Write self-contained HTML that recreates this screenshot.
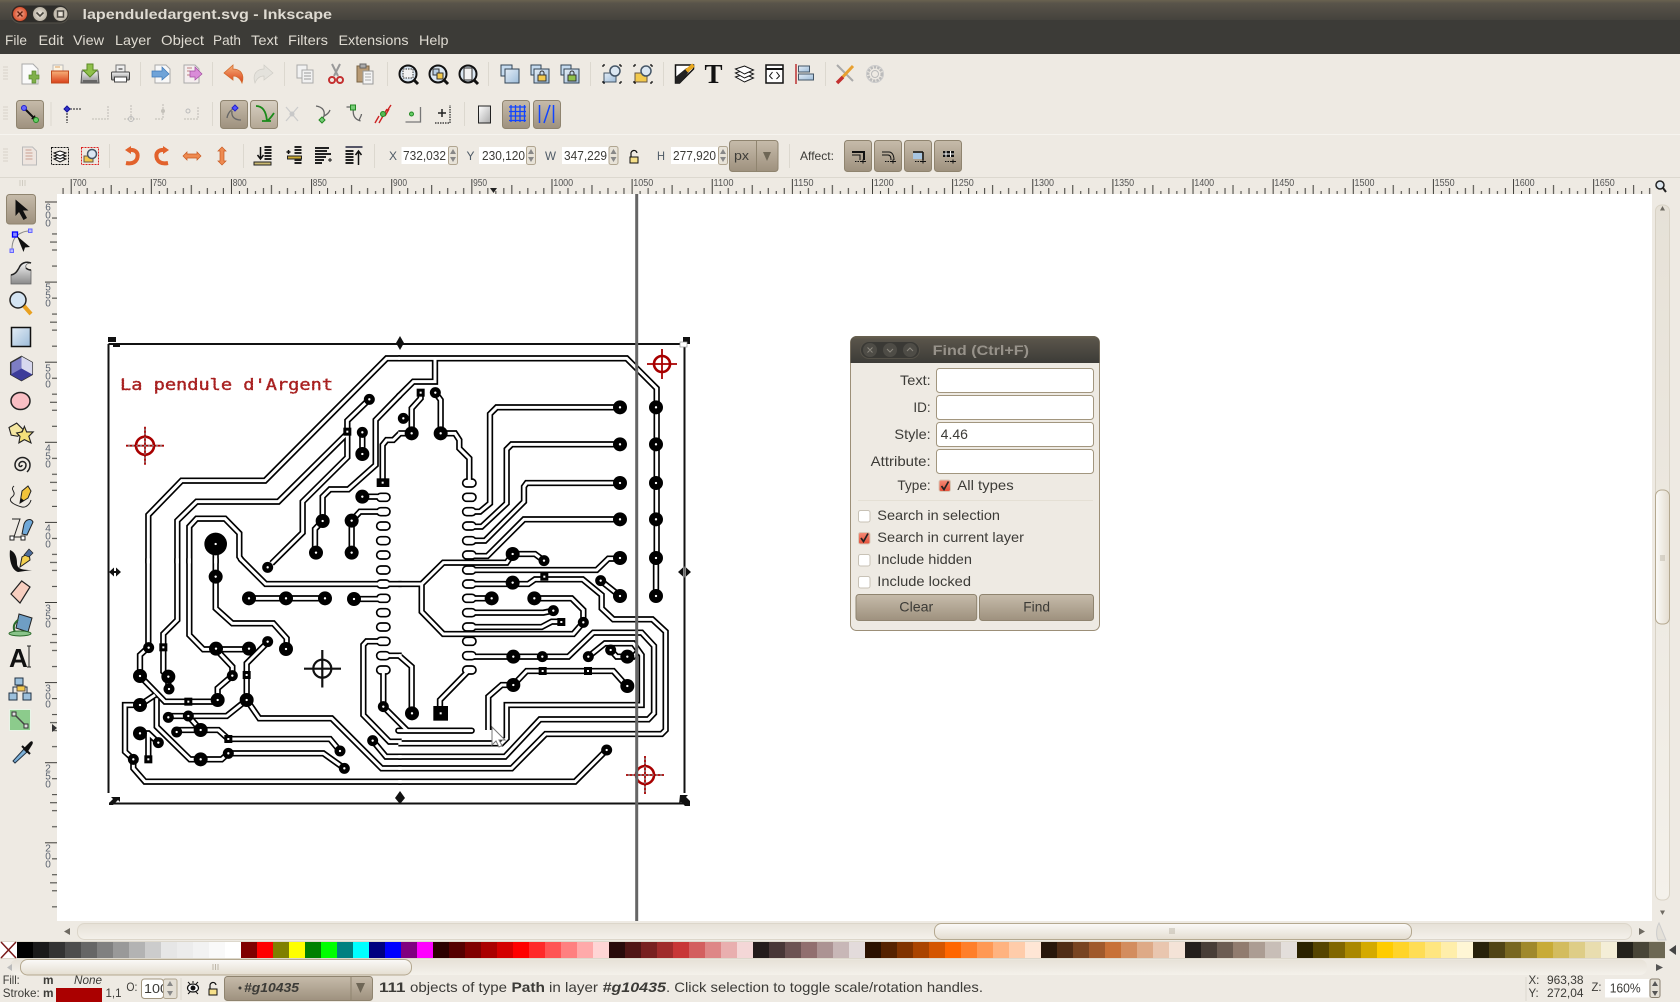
<!DOCTYPE html>
<html><head><meta charset="utf-8"><title>lapenduledargent.svg - Inkscape</title>
<style>
html,body{margin:0;padding:0;background:#eeeae3;overflow:hidden}
svg{display:block}
text{font-family:"Liberation Sans",sans-serif;fill:#3c3b37;font-size:14px}
.m{fill:#dfdbd2}
.r{font-size:10px;fill:#555}
.v{font-size:10px;fill:#5c6470;text-anchor:middle}
.e{fill:#fff;stroke:#a2967f;stroke-width:1}
.sp{stroke:#dcd8cf;stroke-width:1}
.btn{fill:url(#btn);stroke:#8f846f;stroke-width:1}
</style></head><body>
<svg xmlns="http://www.w3.org/2000/svg" width="1680" height="1002" viewBox="0 0 1680 1002">
<defs>
<linearGradient id="tb" x1="0" y1="0" x2="0" y2="1"><stop offset="0" stop-color="#6a6250"/><stop offset=".12" stop-color="#59544a"/><stop offset="1" stop-color="#3c3b37"/></linearGradient>
<linearGradient id="btn" x1="0" y1="0" x2="0" y2="1"><stop offset="0" stop-color="#c6bbaa"/><stop offset="1" stop-color="#9e917e"/></linearGradient>
<linearGradient id="btn2" x1="0" y1="0" x2="0" y2="1"><stop offset="0" stop-color="#d8d0c3"/><stop offset="1" stop-color="#b3a794"/></linearGradient>
<linearGradient id="or" x1="0" y1="0" x2="0" y2="1"><stop offset="0" stop-color="#f7b27a"/><stop offset="1" stop-color="#d9401a"/></linearGradient>
<linearGradient id="bl" x1="0" y1="0" x2="1" y2="1"><stop offset="0" stop-color="#e4edf6"/><stop offset="1" stop-color="#9dbcd9"/></linearGradient>
<linearGradient id="gy" x1="0" y1="0" x2="0" y2="1"><stop offset="0" stop-color="#f4f4f4"/><stop offset="1" stop-color="#8a8a8a"/></linearGradient>
<linearGradient id="wh" x1="0" y1="0" x2="1" y2="1"><stop offset="0" stop-color="#fff"/><stop offset="1" stop-color="#aaa"/></linearGradient>
<linearGradient id="sc" x1="0" y1="0" x2="0" y2="1"><stop offset="0" stop-color="#fbfaf8"/><stop offset="1" stop-color="#e4ddd0"/></linearGradient>
<linearGradient id="st" x1="0" y1="0" x2="0" y2="1"><stop offset="0" stop-color="#e6e1d7"/><stop offset="1" stop-color="#f4f1eb"/></linearGradient>
<linearGradient id="sv" x1="0" y1="0" x2="1" y2="0"><stop offset="0" stop-color="#fbfaf8"/><stop offset="1" stop-color="#e4ddd0"/></linearGradient>
<linearGradient id="chk" x1="0" y1="0" x2="0" y2="1"><stop offset="0" stop-color="#f58a76"/><stop offset="1" stop-color="#e4503a"/></linearGradient>
<radialGradient id="cl"><stop offset="0" stop-color="#f2b19c"/><stop offset="1" stop-color="#d84a26"/></radialGradient>
<radialGradient id="lt"><stop offset="0" stop-color="#eee9df"/><stop offset="1" stop-color="#b6afa1"/></radialGradient>
<pattern id="rt" x="70.7" y="178" width="80.13" height="16" patternUnits="userSpaceOnUse">
<path d="M.5 1V16M8.5 13V16M16.5 10V16M24.5 13V16M32.5 10V16M40.5 7V16M48.5 13V16M56.5 10V16M64.5 13V16M72.5 10V16" stroke="#3c3b37" stroke-width="1" fill="none"/></pattern>
<pattern id="rl" x="45" y="201.5" width="12" height="80.1" patternUnits="userSpaceOnUse">
<path d="M0 .5H12M7 16.5H12M7 32.5H12M5 40.5H12M7 48.5H12M7 64.5H12" stroke="#3c3b37" stroke-width="1" fill="none"/></pattern>

<g id="B"><circle r="21"/><circle r="3.5" fill="#fff"/></g>
<g id="s"><circle r="16.500"/><circle r="3.5" fill="#fff"/></g>
<g id="q"><rect x="-12" y="-12" width="24" height="24"/><rect x="-3" y="-3" width="6" height="6" fill="#fff"/></g>

<g id="tr" fill="none">
<g>
<path d="M145 700V555L245 452H495L860 85H900"/>
<path d="M232 700V572L290 515H535L742 310"/>
<path d="M808 208L742 272V382L608 515V608L515 700"/>
<path d="M268 700V590L290 566H375L418 610V680L426 692"/>
<path d="M900 195L827 270V405L745 478H690L668 500V573L645 597V668"/>
<path d="M848 458V345L860 330H880L900 310"/>
<path d="M787 307V372M787 500H850M755 572L780 545H850M755 572V668M347 642V700"/>
</g>
<g transform="translate(900,0)">
<path d="M-5 85H680L770 175V700"/>
<path d="M105 85V155H40L-5 200"/>
<path d="M106 188L122 210V310H165L178 330V355L208 385V459"/>
<path d="M62 188V205L35 235V310"/>
<path d="M-5 310H35"/>
<path d="M660 232H290L270 252V520L240 545H208"/>
<path d="M660 343H335L320 358V520L245 590H208"/>
<path d="M660 459H380L372 470V515L255 632H208"/>
<path d="M660 568H372L262 678H208"/>
<path d="M338 672H405L432 692"/>
</g>
<g transform="translate(0,690)">
<path d="M145 -5V262L120 285V348L195 425H353"/>
<path d="M353 420V385L397 347V320L348 268"/>
<path d="M268 -5V225L310 268H447"/>
<path d="M232 -5V180L190 222V335L205 350V387"/>
<path d="M347 -5V145L397 190H520L560 235V267"/>
<path d="M447 115H675M762 117H850"/>
<path d="M420 -5L497 72H905"/>
<path d="M505 245L440 310V420L380 468H205"/>
<path d="M440 420L478 475H695L845 625H905"/>
<path d="M265 468L302 510H230"/>
<path d="M302 510H355L385 537H690L720 573"/>
<path d="M120 435H75V575L100 598V625L135 665H905"/>
<path d="M120 435L165 405"/>
<path d="M170 415V500L270 598H365L385 580H670L733 625"/>
<path d="M120 520H145L175 548M145 520V598"/>
<path d="M850 244H800L790 255V465L868 545H905"/>
<path d="M818 542L858 590H905"/>
<path d="M850 287H905"/>
<path d="M850 330V440L922 512"/>
</g>
<g transform="translate(900,690)">
<path d="M338 -18L320 8H130L65 72V155L130 222H520L550 187"/>
<path d="M-5 72H65"/>
<path d="M208 30H590L625 -4H660"/>
<path d="M208 72H385L405 58H548L605 105V145L640 178H757L797 215V510L785 522H437L335 625H-5"/>
<path d="M-5 590H315L420 478H745L762 460V258L725 218H580L505 290H208"/>
<path d="M-5 550H305L320 535V435H725V285L700 250H615L565 290"/>
<path d="M-5 665H525L620 570"/>
<path d="M-5 285L35 320V460"/>
<path d="M-5 512H215" stroke-linecap="round"/>
<path d="M208 330L120 420V460"/>
<path d="M208 115H272M403 115H515L550 150V187"/>
<path d="M208 158H430L460 152M208 201H425L455 185H484"/>
<path d="M602 62L660 108"/>
<path d="M265 510V410L305 375H340L380 333H640L680 378"/>
<path d="M632 270L650 290H700L718 272"/>
<path d="M768 -5V108"/>
</g>
</g>
<path id="pl" fill="none" stroke-linecap="round" d="M842 502h16M842 545h16M842 588h16M842 632h16M842 675h16M842 720h16M842 762h16M842 805h16M842 848h16M842 891h16M842 934h16M842 977h16M842 1020h16M1100 459h16M1100 502h16M1100 545h16M1100 588h16M1100 632h16M1100 675h16M1100 720h16M1100 762h16M1100 805h16M1100 848h16M1100 891h16M1100 934h16M1100 977h16M1100 1020h16"/>

<g id="pads">
<circle cx="347" cy="642" r="34"/><circle cx="347" cy="642" r="3.500" fill="#fff"/>
<use href="#s" x="808" y="208"/><use href="#q" x="742" y="305"/><use href="#s" x="787" y="307"/><use href="#B" x="787" y="372"/><use href="#B" x="787" y="500"/><use href="#B" x="668" y="573"/><use href="#B" x="755" y="572"/><use href="#B" x="648" y="668"/><use href="#B" x="755" y="668"/>
<rect x="830" y="445" width="38" height="26"/><rect x="845" y="455" width="6" height="6" fill="#fff"/>
<g transform="translate(900,0)">
<use href="#q" x="62" y="188"/><use href="#s" x="106" y="188"/><use href="#s" x="10" y="265"/><use href="#B" x="35" y="310"/><use href="#B" x="122" y="310"/>
<use href="#B" x="660" y="232"/><use href="#B" x="660" y="343"/><use href="#B" x="660" y="459"/><use href="#B" x="660" y="568"/><use href="#B" x="660" y="684"/>
<use href="#B" x="768" y="232"/><use href="#B" x="768" y="343"/><use href="#B" x="768" y="459"/><use href="#B" x="768" y="568"/><use href="#B" x="768" y="684"/>
<use href="#B" x="338" y="672"/><use href="#s" x="432" y="692"/>
</g>
<g transform="translate(0,690)">
<use href="#B" x="347" y="50"/><use href="#B" x="447" y="115"/><use href="#B" x="558" y="115"/><use href="#B" x="675" y="115"/><use href="#B" x="762" y="117"/>
<use href="#s" x="503" y="245"/><use href="#B" x="558" y="267"/><use href="#s" x="146" y="263"/><use href="#q" x="190" y="262"/><use href="#B" x="120" y="348"/><use href="#B" x="205" y="350"/><use href="#s" x="207" y="387"/><use href="#s" x="397" y="347"/><use href="#B" x="348" y="266"/><use href="#B" x="447" y="266"/><use href="#q" x="265" y="425"/><use href="#B" x="353" y="420"/><use href="#q" x="440" y="345"/><use href="#B" x="440" y="420"/><use href="#B" x="120" y="435"/><use href="#s" x="205" y="472"/><use href="#s" x="265" y="468"/><use href="#B" x="302" y="510"/><use href="#s" x="230" y="516"/><use href="#q" x="385" y="537"/><use href="#s" x="720" y="573"/><use href="#B" x="120" y="520"/><use href="#s" x="175" y="548"/><use href="#q" x="145" y="598"/><use href="#s" x="100" y="598"/><use href="#B" x="302" y="598"/><use href="#s" x="385" y="580"/><use href="#s" x="733" y="625"/><use href="#s" x="850" y="440"/><use href="#s" x="818" y="542"/><use href="#s" x="503" y="22"/>
</g>
<g transform="translate(900,690)">
<use href="#B" x="338" y="68"/><use href="#q" x="433" y="50"/><use href="#s" x="602" y="62"/><use href="#B" x="660" y="108"/><use href="#B" x="768" y="108"/><use href="#B" x="275" y="115"/><use href="#B" x="403" y="115"/><use href="#s" x="460" y="152"/><use href="#q" x="484" y="186"/><use href="#s" x="550" y="187"/><use href="#B" x="340" y="290"/><use href="#s" x="427" y="290"/><use href="#s" x="565" y="290"/><use href="#s" x="632" y="270"/><use href="#B" x="682" y="290"/><use href="#B" x="340" y="375"/><use href="#q" x="428" y="333"/><use href="#q" x="564" y="333"/><use href="#B" x="682" y="378"/><use href="#B" x="36" y="460"/><rect x="100" y="438" width="44" height="44"/><rect x="119" y="457" width="6" height="6" fill="#fff"/><use href="#s" x="620" y="570"/>
</g>
</g>
</defs>

<!-- window chrome -->
<rect width="1680" height="1002" fill="#eeeae3"/>
<rect width="1680" height="27" fill="url(#tb)"/>
<rect y="20" width="1680" height="34" fill="#3c3b37"/>
<rect x="11" y="5" width="58" height="18" rx="9" fill="#2e2d2a" stroke="#55524a"/>
<circle cx="20" cy="14" r="7.5" fill="url(#cl)" stroke="#3a2620"/>
<circle cx="40" cy="14" r="7.5" fill="url(#lt)" stroke="#33312c"/>
<circle cx="60.5" cy="14" r="7.5" fill="url(#lt)" stroke="#33312c"/>
<path d="M17.5 11.5l5 5M22.5 11.5l-5 5" stroke="#5a1c0c" stroke-width="1.4"/>
<path d="M36.5 12.5l3.5 3.5 3.5-3.5" stroke="#4a4740" stroke-width="1.6" fill="none"/>
<rect x="57.5" y="11" width="6" height="6" fill="none" stroke="#4a4740" stroke-width="1.5"/>
<text x="82.5" y="19" class="m" textLength="249.5" lengthAdjust="spacingAndGlyphs" style="font-weight:bold;font-size:14px">lapenduledargent.svg - Inkscape</text>
<text x="5" y="45" class="m" textLength="22" lengthAdjust="spacingAndGlyphs">File</text>
<text x="38.5" y="45" class="m" textLength="25" lengthAdjust="spacingAndGlyphs">Edit</text>
<text x="73" y="45" class="m" textLength="31" lengthAdjust="spacingAndGlyphs">View</text>
<text x="115" y="45" class="m" textLength="36" lengthAdjust="spacingAndGlyphs">Layer</text>
<text x="161" y="45" class="m" textLength="43" lengthAdjust="spacingAndGlyphs">Object</text>
<text x="213" y="45" class="m" textLength="28" lengthAdjust="spacingAndGlyphs">Path</text>
<text x="251" y="45" class="m" textLength="27" lengthAdjust="spacingAndGlyphs">Text</text>
<text x="288" y="45" class="m" textLength="40" lengthAdjust="spacingAndGlyphs">Filters</text>
<text x="338.5" y="45" class="m" textLength="70" lengthAdjust="spacingAndGlyphs">Extensions</text>
<text x="419" y="45" class="m" textLength="29.5" lengthAdjust="spacingAndGlyphs">Help</text>

<!-- toolbar grips + separators -->
<path d="M3 67h5M3 70h5M3 73h5M3 76h5M3 79h5M3 107h5M3 110h5M3 113h5M3 116h5M3 119h5M3 149h5M3 152h5M3 155h5M3 158h5M3 161h5" stroke="#d8d3c8" stroke-width="1"/>
<path class="sp" d="M140.500 62V86M212.500 62V86M284.500 62V86M387.500 62V86M488.500 62V86M590.500 62V86M663.500 62V86M825.500 62V86M51 102V126M212.500 102V126M464.500 102V126M109.500 144V168M243.500 144V168M374.500 144V168M789.500 144V168"/>
<path d="M0 134.500H1680" stroke="#f6f4ef"/>
<path d="M0 177.500H1680" stroke="#dcd8cf"/>

<!-- ROW 1 icons -->
<g transform="translate(30,74)"><path d="M-8-10H3l5 5V10H-8z" fill="#fafafa" stroke="#aaa"/><path d="M-1 1h3v-4h4v4h3v4H6v4H2V5h-3z" fill="#7fb04a" stroke="#5a8a30" stroke-width=".7"/></g>
<g transform="translate(60,74)"><path d="M-7-9H3V-3H-7z" fill="#fbf3e2" stroke="#bbb"/><path d="M-5-7h5" stroke="#e0a060"/><rect x="-8.500" y="-3" width="17" height="12" fill="url(#or)" stroke="#c04a1e"/></g>
<g transform="translate(90,74)"><path d="M-8-3H8L9 9H-9z" fill="url(#gy)" stroke="#555"/><rect x="-7" y="6" width="14" height="3" fill="#666"/><path d="M-3-10H3V-4H7L0 3-7-4H-3z" fill="#8fc04a" stroke="#5c8a26"/></g>
<g transform="translate(120.500,74)"><rect x="-4.500" y="-9" width="9" height="9" fill="#eee" stroke="#777"/><rect x="-9" y="-2" width="18" height="8" rx="1" fill="url(#gy)" stroke="#444"/><rect x="-6" y="3" width="12" height="5" fill="#fff" stroke="#444"/><path d="M-2-6h4v2H-2z" fill="#888"/></g>
<g transform="translate(162,74)"><path d="M-7-9H4l4 4V9H-7z" fill="#f8f8f8" stroke="#aaa"/><path d="M-10-3H0V-7L7 0 0 6V3H-10z" fill="#6fa3d8" stroke="#3d78b8" stroke-width=".7"/></g>
<g transform="translate(192,74)"><path d="M-8-9H3l4 4V9H-8z" fill="#f4eeee" stroke="#aaa"/><path d="M-5-6h5M-5-3h3M-5 1h4" stroke="#c08080"/><path d="M-2-3H3V-7L10 0 3 6V3H-2z" fill="#d98cd8" stroke="#a24ca0" stroke-width=".7"/></g>
<g transform="translate(234,74)"><path d="M-1-9-10-1-1 6V2C3 2 6 4 8 9 11 0 6-5-1-5z" fill="url(#or)" stroke="#d26a2a" stroke-width=".8"/></g>
<g transform="translate(263,74)"><path d="M1-9 10-1 1 6V2C-3 2-6 4-8 9-11 0-6-5 1-5z" fill="#e4e2dc" stroke="#cfcdc6" stroke-width=".7"/></g>
<g transform="translate(305,74)" stroke="#aaa" fill="#f2f2f2"><rect x="-8" y="-9" width="10" height="13"/><rect x="-3" y="-4" width="11" height="13"/><path d="M-1-1h7M-1 2h7M-1 5h7" stroke="#999" fill="none"/></g>
<g transform="translate(336,74)"><path d="M-4-10 2 2M4-10-2 2" stroke="#999" stroke-width="2"/><circle cx="-4" cy="6" r="3" fill="none" stroke="#c43030" stroke-width="2"/><circle cx="4" cy="6" r="3" fill="none" stroke="#c43030" stroke-width="2"/></g>
<g transform="translate(365,74)"><rect x="-8" y="-8" width="12" height="16" fill="#b89a74" stroke="#7a6444"/><rect x="-5" y="-10" width="6" height="4" fill="#aaa" stroke="#666"/><rect x="-2" y="-3" width="10" height="13" fill="#f4f4f4" stroke="#999"/><path d="M0 0h6M0 3h6M0 6h6" stroke="#aaa"/></g>
<g transform="translate(408,74)"><circle r="8.500" fill="#dbe7f2" stroke="#111" stroke-width="2"/><rect x="-5" y="-5" width="10" height="9" fill="#f2f2f2" stroke="#333" stroke-dasharray="1.500 1"/><path d="M6 6l4 4" stroke="#111" stroke-width="3"/></g>
<g transform="translate(438,74)"><circle r="8.500" fill="#dbe7f2" stroke="#111" stroke-width="2"/><rect x="-5" y="-5" width="6" height="6" fill="#b8cfe4" stroke="#333"/><rect x="-1" y="-1" width="6" height="6" fill="#f2c94c" stroke="#333"/><path d="M6 6l4 4" stroke="#111" stroke-width="3"/></g>
<g transform="translate(468,74)"><circle r="8.500" fill="#dbe7f2" stroke="#111" stroke-width="2"/><rect x="-4" y="-6" width="8" height="12" fill="#f2f2f2" stroke="#333"/><path d="M6 6l4 4" stroke="#111" stroke-width="3"/></g>
<g transform="translate(510,74)"><rect x="-9" y="-9" width="11" height="11" fill="#c6dbef" stroke="#345"/><rect x="-5" y="-5" width="14" height="14" fill="url(#bl)" stroke="#345"/></g>
<g transform="translate(540,74)"><rect x="-9" y="-9" width="10" height="10" fill="#c6dbef" stroke="#345"/><rect x="-6" y="-5" width="15" height="14" fill="url(#bl)" stroke="#345"/><rect x="-2" y="1" width="8" height="6" fill="#f2c94c" stroke="#333"/><path d="M0 1v-2a2 2 0 014 0v2" fill="none" stroke="#333"/></g>
<g transform="translate(570,74)"><rect x="-9" y="-9" width="10" height="10" fill="#c6dbef" stroke="#345"/><rect x="-6" y="-5" width="15" height="14" fill="url(#bl)" stroke="#345"/><rect x="-2" y="1" width="8" height="6" fill="#8fc04a" stroke="#333"/><path d="M0 1v-2a2 2 0 014 0v2" fill="none" stroke="#333"/></g>
<g transform="translate(612,74)"><path d="M-9-9h2M7-9h2M-9 9h2M7 9h2M-9-9v2M9-9v2M-9 7v2M9 7v2" stroke="#111" stroke-width="1.200"/><rect x="-8" y="-1" width="12" height="9" fill="url(#bl)" stroke="#456"/><circle cx="3" cy="-3" r="5" fill="#dbe7f2" stroke="#456" stroke-width="1.500"/></g>
<g transform="translate(643,74)"><path d="M-9-9h2M7-9h2M-9 9h2M7 9h2M-9-9v2M9-9v2M-9 7v2M9 7v2" stroke="#111" stroke-width="1.200"/><rect x="-8" y="-1" width="12" height="9" fill="#f2c94c" stroke="#654"/><circle cx="3" cy="-3" r="5" fill="#dbe7f2" stroke="#456" stroke-width="1.500"/></g>
<g transform="translate(684.500,74)"><path d="M-9-9H9V-5L-5 9H-9z" fill="#fff" stroke="#111" stroke-width="1.500"/><path d="M-9 9-9 3 2-6 5-3-4 9z" fill="#222"/><path d="M2-3 9-9" stroke="#e8a820" stroke-width="4"/></g>
<text x="713.500" y="83" text-anchor="middle" style="font-family:'Liberation Serif',serif;font-size:27px;font-weight:bold;fill:#111">T</text>
<g transform="translate(744.500,74)" fill="#fff" stroke="#111"><path d="M-9 3 0 0 9 4 0 8z"/><path d="M-9-1 0-4 9 0 0 4z"/><path d="M-9-5 0-8 9-4 0 0z"/></g>
<g transform="translate(774.500,74)"><rect x="-8.500" y="-9" width="17" height="18" fill="#fff" stroke="#111" stroke-width="1.500"/><path d="M-8-5H8" stroke="#111" stroke-width="2"/><path d="M-2-2-5 2-2 5M2-2 5 2 2 5" fill="none" stroke="#111"/></g>
<g transform="translate(804.500,74)"><path d="M-8.500-10V10" stroke="#b33" stroke-width="1.500"/><rect x="-6" y="-8" width="11" height="6" fill="url(#bl)" stroke="#456"/><rect x="-6" y="0" width="15" height="6" fill="url(#bl)" stroke="#456"/></g>
<g transform="translate(845,74)"><path d="M-8-9 8 7" stroke="#aaa" stroke-width="2"/><path d="M-7 8 8-8" stroke="#e8a030" stroke-width="3"/><path d="M-8 9-2 3" stroke="#c33030" stroke-width="3.500"/></g>
<g transform="translate(875,74)"><circle r="7" fill="none" stroke="#bbb" stroke-width="3" stroke-dasharray="2.500 1"/><circle r="8.500" fill="none" stroke="#ccc"/><circle r="3.500" fill="none" stroke="#bbb"/></g>

<!-- ROW 2 -->
<rect class="btn" x="16.500" y="100.500" width="27" height="28" rx="3"/>
<g transform="translate(30,114)"><path d="M-6-6 5 5" stroke="#111" stroke-width="2"/><path d="M6 6 1 5 5 1z" fill="#111"/><circle cx="-6" cy="-6" r="2.500" fill="#66f" stroke="#22c"/><circle cx="6" cy="6" r="2.500" fill="#6c6" stroke="#282"/></g>
<g transform="translate(67,114)"><path d="M0-4V9M0-5H14" stroke="#444" stroke-width="1.300" stroke-dasharray="2 1" fill="none"/><path d="M0-8 3-5 0-2-3-5z" fill="#33c" stroke="#119"/></g>
<path d="M92 119H108V106M124 119H140M131 105V119M155 119H163V104M163 106M184 119H198V106" stroke="#c9c6bf" stroke-width="1.300" stroke-dasharray="2 1" fill="none"/>
<circle cx="131" cy="119" r="2.500" fill="none" stroke="#bbb"/><circle cx="163" cy="111" r="2" fill="#c4c1ba"/><circle cx="188" cy="111" r="2" fill="none" stroke="#bbb"/>
<rect class="btn" x="220.500" y="100.500" width="27" height="28" rx="3"/>
<rect x="250.500" y="100.500" width="27" height="28" rx="3" fill="url(#btn2)" stroke="#8f846f"/>
<g transform="translate(234,114)"><path d="M-7 4C-6-2-2-5 1-6M-2-3C-3 3 1 6 7 6" fill="none" stroke="#666" stroke-width="1.300"/><path d="M1-9 4-6 1-3-2-6z" fill="#55f" stroke="#22c"/></g>
<path d="M256 106C262 106 266 110 267 121M267 121C270 119 272 116 274 113M262 121H271" fill="none" stroke="#1a8a1a" stroke-width="1.800"/>
<path d="M286 121 298 107M286 107 298 121" stroke="#ccc" stroke-width="1.300"/><circle cx="292" cy="114" r="2.500" fill="#c8c8c8"/>
<g transform="translate(323,114)"><path d="M-7-8C0-7 2-3 1 2M1 2C3 1 6-1 7-4M1 2-1 6" fill="none" stroke="#666" stroke-width="1.300"/><path d="M-1 3 2 6-1 9-4 6z" fill="#7c7" stroke="#282"/></g>
<g transform="translate(353.500,114)"><path d="M-7-7H0C-1 0 0 5 7 7 4 6 8 3 8 0" fill="none" stroke="#666" stroke-width="1.300"/><rect x="-3" y="-9" width="5" height="5" fill="#7c7" stroke="#282"/></g>
<g transform="translate(383,114)"><path d="M-8 9-4 2M-4 9 0 2M0 2 4-5M2 2 6-5M4-3 8-9" stroke="#c22" stroke-width="1.400"/><circle cx="0" cy="0" r="2.500" fill="#5b5" stroke="#282"/></g>
<g transform="translate(412.500,114)"><path d="M-7 8H8V-7" stroke="#777" stroke-width="1.300" fill="none"/><circle cx="-1" cy="0" r="2" fill="#6c6" stroke="#282"/></g>
<g transform="translate(442,114)"><path d="M-7 9H8V-9" stroke="#222" stroke-width="1.200" stroke-dasharray="1.500 1" fill="none"/><path d="M-4-1H4M0-5V3" stroke="#222" stroke-width="1.500"/></g>
<rect x="478.500" y="106" width="12" height="17" fill="url(#wh)" stroke="#222"/>
<rect class="btn" x="502.500" y="100.500" width="27" height="28" rx="3"/>
<path d="M509 107H526M509 111.500H526M509 116H526M509 120.500H526M511 105V122M515.500 105V122M520 105V122M524.500 105V122" stroke="#14f" stroke-width="1.300"/>
<rect class="btn" x="533.500" y="100.500" width="27" height="28" rx="3"/>
<path d="M539.500 105V123M553.500 105V123" stroke="#14f" stroke-width="1.500"/><path d="M544 123 550 105" stroke="#14f" stroke-width="1.500"/>

<!-- ROW 3 -->
<g transform="translate(29.500,156)"><path d="M-7-9H3L7-5V9H-7z" fill="#eee5df" stroke="#bbb"/><path d="M-4-6H2M-4-3H3M-4 0H3M-4 3H3" stroke="#c9a090"/></g>
<g transform="translate(60,156)"><rect x="-8.500" y="-8.500" width="17" height="17" fill="none" stroke="#111" stroke-dasharray="2 1"/><g fill="#fff" stroke="#111"><path d="M-6 3 0 1 6 3 0 6z"/><path d="M-6 0 0-2 6 0 0 3z"/><path d="M-6-3 0-5 6-3 0 0z"/></g></g>
<g transform="translate(90,156)"><rect x="-8.500" y="-8.500" width="17" height="17" fill="none" stroke="#d22" stroke-dasharray="2 1"/><rect x="-6" y="0" width="9" height="6" fill="#f2c94c" stroke="#654"/><circle cx="2" cy="-2" r="4.500" fill="#dbe7f2" stroke="#456" stroke-width="1.500"/></g>
<g fill="none" stroke-width="4" stroke="#e2622c"><path d="M128 150C136 149 139 153 137 159 135 163 131 164 126 163"/><path d="M166 150C158 149 155 153 157 159 159 163 163 164 168 163"/></g>
<path d="M125 150 131 146V154zM169 150 163 146V154z" fill="#e2622c"/>
<path d="M183 156 187 152V154H197V152L201 156 197 160V158H187V160z" fill="#ee8a50" stroke="#c85a22" stroke-width=".7"/>
<path d="M222 147 226 151H224V161H226L222 165 218 161H220V151H218z" fill="#ee8a50" stroke="#c85a22" stroke-width=".7"/>
<g transform="translate(262.500,156)"><path d="M-2-9V2M-5-1-2 3 1-1" fill="none" stroke="#111" stroke-width="1.500"/><path d="M2-9H9M2-6H9M2-3H9M2 0H9M2 3H9" stroke="#222" stroke-width="2"/><rect x="-8.500" y="6" width="17" height="3" fill="#c9b870" stroke="#222"/></g>
<g transform="translate(293.500,156)"><path d="M1-9H8M1-6H8M1-3H8M1 4H8M1 7H8" stroke="#222" stroke-width="2"/><rect x="-6" y="0" width="14" height="3" fill="#c9a830" stroke="#222"/><path d="M-7-4H-3M-5-6V-2" stroke="#111" stroke-width="1.500"/></g>
<g transform="translate(323,156)"><path d="M-8-8H6M-8-5H4M-8-2H8M-8 1H3M-8 4H1M-8 7H-1" stroke="#222" stroke-width="2"/><path d="M5 4H9M7 2V6" stroke="#111"/></g>
<g transform="translate(353.500,156)"><path d="M-8-9H9" stroke="#556" stroke-width="2"/><path d="M-8-5H0M-8-2H0M-8 1H0M-8 4H0M-8 7H0" stroke="#222" stroke-width="2"/><path d="M5 9V-5M2-1 5-5 8-1" fill="none" stroke="#111" stroke-width="1.500"/></g>

<text x="389" y="160" textLength="8" lengthAdjust="spacingAndGlyphs" style="font-size:12px;fill:#4e5a66">X</text>
<rect x="401.500" y="147" width="46.500" height="17" fill="#fff"/><text x="403" y="160" textLength="43" lengthAdjust="spacingAndGlyphs" style="font-size:12.500px">732,032</text>
<text x="466.500" y="160" textLength="8" lengthAdjust="spacingAndGlyphs" style="font-size:12px;fill:#4e5a66">Y</text>
<rect x="479" y="147" width="47" height="17" fill="#fff"/><text x="482" y="160" textLength="43" lengthAdjust="spacingAndGlyphs" style="font-size:12.500px">230,120</text>
<text x="545" y="160" textLength="11" lengthAdjust="spacingAndGlyphs" style="font-size:12px;fill:#4e5a66">W</text>
<rect x="562" y="147" width="46.500" height="17" fill="#fff"/><text x="564" y="160" textLength="43" lengthAdjust="spacingAndGlyphs" style="font-size:12.500px">347,229</text>
<text x="657" y="160" textLength="8" lengthAdjust="spacingAndGlyphs" style="font-size:12px;fill:#4e5a66">H</text>
<rect x="671" y="147" width="47" height="17" fill="#fff"/><text x="673" y="160" textLength="43" lengthAdjust="spacingAndGlyphs" style="font-size:12.500px">277,920</text>
<g fill="#e8e3d8" stroke="#b0a590"><rect x="448.500" y="146.500" width="9" height="18" rx="2"/><rect x="526.500" y="146.500" width="9" height="18" rx="2"/><rect x="609" y="146.500" width="9" height="18" rx="2"/><rect x="718.500" y="146.500" width="9" height="18" rx="2"/></g>
<path d="M453 149 456 154H450zM453 162 456 157H450zM531 149 534 154H528zM531 162 534 157H528zM613.500 149 616.500 154H610.500zM613.500 162 616.500 157H610.500zM723 149 726 154H720zM723 162 726 157H720z" fill="#888"/>
<g transform="translate(634,157)"><rect x="-4" y="0" width="8" height="6" fill="#f6e08a" stroke="#111"/><path d="M-3 0V-3A3 3 0 013-4" fill="none" stroke="#111" stroke-width="1.200"/></g>
<rect class="btn" x="729.500" y="140.500" width="48.500" height="31" rx="3"/>
<path d="M756.500 141V171" stroke="#8f846f"/>
<text x="734" y="160" textLength="15" lengthAdjust="spacingAndGlyphs" style="font-size:13px">px</text>
<path d="M763 152H771L767 161z" fill="#6e6656"/>
<text x="800" y="160" textLength="34" lengthAdjust="spacingAndGlyphs" style="font-size:12px">Affect:</text>
<rect class="btn" x="844.500" y="140.500" width="27" height="31" rx="3"/><rect class="btn" x="874.500" y="140.500" width="27" height="31" rx="3"/><rect class="btn" x="904.500" y="140.500" width="27" height="31" rx="3"/><rect class="btn" x="934.500" y="140.500" width="27" height="31" rx="3"/>
<rect x="913" y="153" width="9" height="6" fill="#a8c6e2"/>
<g fill="none" stroke="#111"><path d="M852 152H864V160" stroke-width="2"/><path d="M852 155H860V160"/><path d="M855 161.500H864" stroke-dasharray="1.500 1"/><path d="M863 159.500V163.500M861 161.500H866"/>
<path d="M882 152H889C892 152 894 155 894 160"/><path d="M882 155H888C890 155 891 157 891 160"/><path d="M885 161.500H894" stroke-dasharray="1.500 1"/><path d="M893 159.500V163.500M891 161.500H896"/>
<path d="M923 152V160" stroke-width="1.500"/><path d="M913 152H923" stroke-width="1.500"/><path d="M915 161.500H924" stroke-dasharray="1.500 1"/><path d="M923 159.500V163.500M921 161.500H926"/>
<path d="M945 161.500H954" stroke-dasharray="1.500 1"/><path d="M953 159.500V163.500M951 161.500H956"/></g>
<path d="M943 151H954V157H943z" fill="#111"/><path d="M946 151V157M950.500 151V157M943 154H954" stroke="#fff"/>

<!-- RULERS -->
<rect x="57" y="178" width="1595" height="16" fill="url(#rt)"/>
<text class="r" x="72.500" y="186" textLength="14" lengthAdjust="spacingAndGlyphs">700</text><text class="r" x="152.600" y="186" textLength="14" lengthAdjust="spacingAndGlyphs">750</text><text class="r" x="232.700" y="186" textLength="14" lengthAdjust="spacingAndGlyphs">800</text><text class="r" x="312.800" y="186" textLength="14" lengthAdjust="spacingAndGlyphs">850</text><text class="r" x="393" y="186" textLength="14" lengthAdjust="spacingAndGlyphs">900</text><text class="r" x="473.100" y="186" textLength="14" lengthAdjust="spacingAndGlyphs">950</text><text class="r" x="553.200" y="186" textLength="20" lengthAdjust="spacingAndGlyphs">1000</text><text class="r" x="633.300" y="186" textLength="20" lengthAdjust="spacingAndGlyphs">1050</text><text class="r" x="713.500" y="186" textLength="20" lengthAdjust="spacingAndGlyphs">1100</text><text class="r" x="793.600" y="186" textLength="20" lengthAdjust="spacingAndGlyphs">1150</text><text class="r" x="873.700" y="186" textLength="20" lengthAdjust="spacingAndGlyphs">1200</text><text class="r" x="953.800" y="186" textLength="20" lengthAdjust="spacingAndGlyphs">1250</text><text class="r" x="1034" y="186" textLength="20" lengthAdjust="spacingAndGlyphs">1300</text><text class="r" x="1114.100" y="186" textLength="20" lengthAdjust="spacingAndGlyphs">1350</text><text class="r" x="1194.200" y="186" textLength="20" lengthAdjust="spacingAndGlyphs">1400</text><text class="r" x="1274.300" y="186" textLength="20" lengthAdjust="spacingAndGlyphs">1450</text><text class="r" x="1354.500" y="186" textLength="20" lengthAdjust="spacingAndGlyphs">1500</text><text class="r" x="1434.600" y="186" textLength="20" lengthAdjust="spacingAndGlyphs">1550</text><text class="r" x="1514.700" y="186" textLength="20" lengthAdjust="spacingAndGlyphs">1600</text><text class="r" x="1594.800" y="186" textLength="20" lengthAdjust="spacingAndGlyphs">1650</text>
<path d="M490 188H497L493.500 193z" fill="#222"/>
<path d="M20 180V186M22.500 180V186M25 180V186" stroke="#d0ccc2"/>
<g transform="translate(1661,187)"><circle cx="-1" cy="-2" r="4" fill="#dde7ef" stroke="#222" stroke-width="1.500"/><path d="M2 1 5 5" stroke="#222" stroke-width="2"/></g>
<rect x="45" y="194" width="12" height="727" fill="url(#rl)"/>
<g transform="translate(0,3.500)">
<text class="v" x="48" y="207">6</text><text class="v" x="48" y="215">0</text><text class="v" x="48" y="223">0</text>
<text class="v" x="48" y="287">5</text><text class="v" x="48" y="295">5</text><text class="v" x="48" y="303">0</text>
<text class="v" x="48" y="368">5</text><text class="v" x="48" y="376">0</text><text class="v" x="48" y="384">0</text>
<text class="v" x="48" y="448">4</text><text class="v" x="48" y="456">5</text><text class="v" x="48" y="464">0</text>
<text class="v" x="48" y="528">4</text><text class="v" x="48" y="536">0</text><text class="v" x="48" y="544">0</text>
<text class="v" x="48" y="608">3</text><text class="v" x="48" y="616">5</text><text class="v" x="48" y="624">0</text>
<text class="v" x="48" y="688">3</text><text class="v" x="48" y="696">0</text><text class="v" x="48" y="704">0</text>
<text class="v" x="48" y="768">2</text><text class="v" x="48" y="776">5</text><text class="v" x="48" y="784">0</text>
<text class="v" x="48" y="848">2</text><text class="v" x="48" y="856">0</text><text class="v" x="48" y="864">0</text>
</g>
<path d="M52 724 57 728 52 732z" fill="#333"/>

<!-- CANVAS -->
<rect x="57" y="194" width="1595" height="727" fill="#fff"/>
<g transform="translate(100,330) scale(.33333)">
<use href="#tr" stroke="#000" stroke-width="19"/>
<use href="#pl" stroke="#000" stroke-width="29"/>
<use href="#tr" stroke="#fff" stroke-width="9"/>
<use href="#pl" stroke="#fff" stroke-width="19"/>
<use href="#pads"/>
</g>

<!-- frame + handles -->
<path d="M108.500 344V793M108.500 344H684.500V793M109 803.500H684" fill="none" stroke="#111" stroke-width="2"/>
<path d="M108 337H116V342H108zM113 343H120V347H113z" fill="#111"/>
<path d="M396 343 400 336 404 343 400 350z" fill="#111"/>
<path d="M395 798 400 791 405 798 400 804z" fill="#111"/>
<path d="M109 572 114 567.500V576.500zM121 572 116 567.500V576.500z" fill="#111"/><path d="M113 571H117V573H113z" fill="#111"/>
<path d="M678 572 683 567.500V576.500zM691 572 686 567.500V576.500z" fill="#111"/><path d="M684.500 566.500V577.500" stroke="#666"/>
<path d="M683 337H690V344H683z" fill="#111"/><rect x="680" y="342" width="7" height="5" fill="#fff" stroke="#999" stroke-width=".7"/>
<path d="M109 803 113 799 111 797H120V802L118 800 113 805H109z" fill="#111"/>
<path d="M680 795H688L686 797 690 801V806H685L681 802 679 804z" fill="#111"/>
<!-- crosshairs -->
<g fill="none" stroke="#a80000" stroke-width="2.600"><circle cx="145" cy="445.700" r="9"/><circle cx="662" cy="364" r="8"/><circle cx="645" cy="775" r="9"/></g>
<g fill="none" stroke="#a80000" stroke-width="1.800"><path d="M126 445.700H164M145 426.700V464.700"/><path d="M647 364H677M662 349V379"/><path d="M626 775H664M645 756V794"/></g>
<g fill="none" stroke="#7a9a9a" stroke-width="1" stroke-dasharray="2 2"><path d="M128 445.700H162M145 428.700V462.700M628 775H662M645 758V792"/></g>
<g fill="none" stroke="#111" stroke-width="2.200"><circle cx="322.300" cy="668.700" r="9"/><path d="M304 668.700H341M322.300 650V687.500"/></g>
<text x="120" y="390" textLength="213" lengthAdjust="spacingAndGlyphs" style="font-family:'DejaVu Sans Mono',monospace;font-size:16px;fill:#a82020;stroke:#a82020;stroke-width:.5;stroke-dasharray:2 .7">La pendule d'Argent</text>
<path d="M636.700 194V921" stroke="#666" stroke-width="3"/>
<path d="M492 727V745L496 741 499 747 502 745.500 499 740H505z" fill="#fff" stroke="#777"/>

<!-- Left toolbar -->
<rect class="btn" x="6.500" y="194.500" width="29" height="29.500" rx="3"/>
<path d="M15.500 199.500V216L19 212 23.500 220 27 218 23 210.500H28.500z" fill="#111"/>
<path d="M12 249C12 241 15 236 20 233.500S27 231 30 231" fill="none" stroke="#888"/>
<rect x="12.500" y="232" width="5" height="5" fill="#88f" stroke="#00f" stroke-width="1.300"/>
<rect x="28.500" y="229" width="3.500" height="3.500" fill="#bbf" stroke="#66f"/><rect x="10" y="249" width="3.500" height="3.500" fill="#bbf" stroke="#66f"/>
<path d="M17 236 30 247 25 247.500 23.500 252z" fill="#111"/>
<path d="M11 284V275C16 274 17 271 19 268 21 263 26 261 31 263 27 263 25 265 26 268 27 269 29 270 31 270V284z" fill="url(#gy)" stroke="#666" stroke-width=".8"/>
<path d="M11 275C16 274 17 271 19 268 21 263 26 261 31 263M31 270C29 270 27 269 26 268" fill="none" stroke="#222" stroke-width="1.500"/>
<circle cx="18" cy="300" r="8" fill="#d4e4f2" stroke="#222" stroke-width="1.500"/><path d="M24 306 31 314" stroke="#e8a020" stroke-width="4"/>
<rect x="11.500" y="327.500" width="19" height="19" fill="url(#bl)" stroke="#111" stroke-width="1.500"/>
<g transform="translate(21.500,368.500) scale(1.2)"><path d="M0-10 9-5V5L0 10-9 5V-5z" fill="#7d7dc4" stroke="#333" stroke-width="1.200"/><path d="M0-10 9-5V5L0 0z" fill="#d8d8ee"/><path d="M0 0-9 5 0 10 9 5z" fill="#3c3c9a"/></g>
<ellipse cx="20.500" cy="401" rx="9.500" ry="8.500" fill="#f9bfc4" stroke="#222" stroke-width="1.500"/>
<g transform="translate(20,433) scale(1.1)"><path d="M-10-5-3-9 3-3-2 3-8 2z" fill="#f4e6a0" stroke="#222"/><path d="M4-6 6-1 12-1 8 3 10 9 4 6-1 9 0 3-3 0 2-1z" fill="#f4e07a" stroke="#222"/></g>
<path d="M22 465a1.500 1.500 0 01-3 0a3.500 3.500 0 017 0a5.500 5.500 0 01-11 0a7.500 7.500 0 0115 0a9.500 9.500 0 01-3 7" fill="none" stroke="#222" stroke-width="1.500"/>
<path d="M14 486C9 490 18 492 12 497S18 506 22 507 30 504 31 500" fill="none" stroke="#222"/>
<path d="M20 503 22 491 28 486 31 491 28 498z" fill="#f2c33a" stroke="#222"/><path d="M20 503 21 498 24 500.500z" fill="#111"/>
<path d="M12 519H20L14 537H24" fill="none" stroke="#222"/><rect x="10" y="536" width="4" height="4" fill="#fff" stroke="#222"/><rect x="21" y="536" width="4" height="4" fill="#fff" stroke="#222"/>
<path d="M22 534 24 524C26 519 31 518 33 522L27 535z" fill="#6fa8d8" stroke="#222"/>
<path d="M10 550C15 552 17 557 17 563S22 570 32 570L18 572C11 570 9 558 10 550z" fill="#111"/>
<path d="M20 567 22 557 29 553 30 560z" fill="#f2d050" stroke="#222"/><path d="M24 555 29 549 33 553 29 557z" fill="#4a6a9a" stroke="#222" stroke-width=".7"/>
<path d="M11 594 21.700 581 30 587 20 603z" fill="#f8cfc0" stroke="#222" stroke-width="1.200"/>
<path d="M19 614 32 618 28 632 16 628z" fill="#6f9ec4" stroke="#222"/><path d="M18 620C13 624 13 628 15 632" fill="none" stroke="#2a6a2a" stroke-width="2"/>
<ellipse cx="20" cy="633.500" rx="11" ry="2.500" fill="#8ac48a" stroke="#2a6a2a"/>
<text x="9" y="667" style="font-size:26px;font-weight:bold;fill:#111">A</text>
<path d="M29 646V667M27 646H31M27 667H31" stroke="#222"/>
<g transform="translate(20,689)"><rect x="-5" y="-11" width="8" height="7" fill="#9cc0dc" stroke="#234"/><rect x="-11" y="4" width="8" height="7" fill="#9cc0dc" stroke="#234"/><rect x="3" y="4" width="8" height="7" fill="#9cc0dc" stroke="#234"/><rect x="-3" y="-3" width="8" height="5" fill="#f2c94c" stroke="#654"/><path d="M-7 4V-2H-3M7 4V-2H5" fill="none" stroke="#234"/></g>
<g transform="translate(20,720)"><rect x="-10.500" y="-10.500" width="21" height="21" fill="#8ccb8c" stroke="#e8f4e8"/><path d="M-6-6 6 6" stroke="#444" stroke-width="1.500"/><rect x="-8" y="-8" width="4" height="4" fill="#ddd" stroke="#333"/><rect x="4" y="4" width="4" height="4" fill="#ddd" stroke="#333"/></g>
<path d="M15 763 13 761 24 749 27 752z" fill="#7cb0d8" stroke="#234"/><path d="M23 749 30 742C32 740 34 742 32 745L27 753z" fill="#111"/><path d="M22 746 30 754" stroke="#111" stroke-width="2"/>

<!-- Vertical scrollbar -->
<rect x="1655.500" y="205" width="14" height="695" rx="6" fill="url(#st)" stroke="#d8d2c5"/>
<rect x="1655.500" y="490" width="14" height="134" rx="6" fill="url(#sv)" stroke="#b4a88f"/>
<path d="M1660 556H1665M1660 558H1665M1660 560H1665" stroke="#bdb6a8"/>
<path d="M1662.500 206 1665 210.500H1660zM1662.500 915 1665 910.500H1660z" fill="#6e6a62"/>

<!-- H scrollbar -->
<rect x="77.500" y="923.500" width="1554" height="16" rx="7" fill="url(#st)" stroke="#dcd6ca"/>
<rect x="934.500" y="923.500" width="477" height="16" rx="7" fill="url(#sc)" stroke="#b4a88f"/>
<path d="M1170 928V934M1172 928V934M1174 928V934" stroke="#bdb6a8"/>
<path d="M64 931.500 70 928V935zM1645 931.500 1639 928V935z" fill="#6e6a62"/>
<path d="M1659 923 1666 940H1658C1656 936 1656 928 1659 923z" fill="#e4e0d8" stroke="#ccc"/>

<!-- palette -->
<rect x="0" y="941" width="1680" height="18" fill="#ddd8cc"/>
<rect x="0" y="942" width="17" height="16" fill="#fff"/><path d="M1 942 16 958M16 942 1 958" stroke="#7a1a1a" stroke-width="1.500"/>
<g>
<rect x="17" y="942" width="16" height="16" fill="#000"/><rect x="33" y="942" width="16" height="16" fill="#1a1a1a"/><rect x="49" y="942" width="16" height="16" fill="#333"/><rect x="65" y="942" width="16" height="16" fill="#4d4d4d"/><rect x="81" y="942" width="16" height="16" fill="#666"/><rect x="97" y="942" width="16" height="16" fill="#808080"/><rect x="113" y="942" width="16" height="16" fill="#999"/><rect x="129" y="942" width="16" height="16" fill="#b3b3b3"/><rect x="145" y="942" width="16" height="16" fill="#ccc"/><rect x="161" y="942" width="16" height="16" fill="#e6e6e6"/><rect x="177" y="942" width="16" height="16" fill="#ececec"/><rect x="193" y="942" width="16" height="16" fill="#f2f2f2"/><rect x="209" y="942" width="16" height="16" fill="#f9f9f9"/><rect x="225" y="942" width="16" height="16" fill="#fff"/>
<rect x="241" y="942" width="16" height="16" fill="#800000"/><rect x="257" y="942" width="16" height="16" fill="#f00"/><rect x="273" y="942" width="16" height="16" fill="#808000"/><rect x="289" y="942" width="16" height="16" fill="#ff0"/><rect x="305" y="942" width="16" height="16" fill="#008000"/><rect x="321" y="942" width="16" height="16" fill="#0f0"/><rect x="337" y="942" width="16" height="16" fill="#008080"/><rect x="353" y="942" width="16" height="16" fill="#0ff"/><rect x="369" y="942" width="16" height="16" fill="#000080"/><rect x="385" y="942" width="16" height="16" fill="#00f"/><rect x="401" y="942" width="16" height="16" fill="#800080"/><rect x="417" y="942" width="16" height="16" fill="#f0f"/>
<rect x="433" y="942" width="16" height="16" fill="#2b0000"/><rect x="449" y="942" width="16" height="16" fill="#500"/><rect x="465" y="942" width="16" height="16" fill="#800000"/><rect x="481" y="942" width="16" height="16" fill="#a00"/><rect x="497" y="942" width="16" height="16" fill="#d40000"/><rect x="513" y="942" width="16" height="16" fill="#f00"/><rect x="529" y="942" width="16" height="16" fill="#ff2a2a"/><rect x="545" y="942" width="16" height="16" fill="#f55"/><rect x="561" y="942" width="16" height="16" fill="#ff8080"/><rect x="577" y="942" width="16" height="16" fill="#faa"/><rect x="593" y="942" width="16" height="16" fill="#ffd5d5"/>
<rect x="609" y="942" width="16" height="16" fill="#280b0b"/><rect x="625" y="942" width="16" height="16" fill="#501616"/><rect x="641" y="942" width="16" height="16" fill="#782121"/><rect x="657" y="942" width="16" height="16" fill="#a02c2c"/><rect x="673" y="942" width="16" height="16" fill="#c83737"/><rect x="689" y="942" width="16" height="16" fill="#d35f5f"/><rect x="705" y="942" width="16" height="16" fill="#de8787"/><rect x="721" y="942" width="16" height="16" fill="#e9afaf"/><rect x="737" y="942" width="16" height="16" fill="#f4d7d7"/>
<rect x="753" y="942" width="16" height="16" fill="#241c1c"/><rect x="769" y="942" width="16" height="16" fill="#483737"/><rect x="785" y="942" width="16" height="16" fill="#6c5353"/><rect x="801" y="942" width="16" height="16" fill="#916f6f"/><rect x="817" y="942" width="16" height="16" fill="#ac9393"/><rect x="833" y="942" width="16" height="16" fill="#c8b7b7"/><rect x="849" y="942" width="16" height="16" fill="#e3dbdb"/>
<rect x="865" y="942" width="16" height="16" fill="#2b1100"/><rect x="881" y="942" width="16" height="16" fill="#520"/><rect x="897" y="942" width="16" height="16" fill="#803300"/><rect x="913" y="942" width="16" height="16" fill="#a40"/><rect x="929" y="942" width="16" height="16" fill="#d45500"/><rect x="945" y="942" width="16" height="16" fill="#f60"/><rect x="961" y="942" width="16" height="16" fill="#ff7f2a"/><rect x="977" y="942" width="16" height="16" fill="#f95"/><rect x="993" y="942" width="16" height="16" fill="#ffb380"/><rect x="1009" y="942" width="16" height="16" fill="#fca"/><rect x="1025" y="942" width="16" height="16" fill="#ffe6d5"/>
<rect x="1041" y="942" width="16" height="16" fill="#28170b"/><rect x="1057" y="942" width="16" height="16" fill="#502d16"/><rect x="1073" y="942" width="16" height="16" fill="#784421"/><rect x="1089" y="942" width="16" height="16" fill="#a05a2c"/><rect x="1105" y="942" width="16" height="16" fill="#c87137"/><rect x="1121" y="942" width="16" height="16" fill="#d38d5f"/><rect x="1137" y="942" width="16" height="16" fill="#deaa87"/><rect x="1153" y="942" width="16" height="16" fill="#e9c6af"/><rect x="1169" y="942" width="16" height="16" fill="#f4e3d7"/>
<rect x="1185" y="942" width="16" height="16" fill="#241f1c"/><rect x="1201" y="942" width="16" height="16" fill="#483e37"/><rect x="1217" y="942" width="16" height="16" fill="#6c5d53"/><rect x="1233" y="942" width="16" height="16" fill="#917c6f"/><rect x="1249" y="942" width="16" height="16" fill="#ac9d93"/><rect x="1265" y="942" width="16" height="16" fill="#c8beb7"/><rect x="1281" y="942" width="16" height="16" fill="#e3dedb"/>
<rect x="1297" y="942" width="16" height="16" fill="#2b2200"/><rect x="1313" y="942" width="16" height="16" fill="#540"/><rect x="1329" y="942" width="16" height="16" fill="#806600"/><rect x="1345" y="942" width="16" height="16" fill="#a80"/><rect x="1361" y="942" width="16" height="16" fill="#d4aa00"/><rect x="1377" y="942" width="16" height="16" fill="#fc0"/><rect x="1393" y="942" width="16" height="16" fill="#ffd42a"/><rect x="1409" y="942" width="16" height="16" fill="#fd5"/><rect x="1425" y="942" width="16" height="16" fill="#ffe680"/><rect x="1441" y="942" width="16" height="16" fill="#fea"/><rect x="1457" y="942" width="16" height="16" fill="#fff6d5"/>
<rect x="1473" y="942" width="16" height="16" fill="#28220b"/><rect x="1489" y="942" width="16" height="16" fill="#504416"/><rect x="1505" y="942" width="16" height="16" fill="#786721"/><rect x="1521" y="942" width="16" height="16" fill="#a0892c"/><rect x="1537" y="942" width="16" height="16" fill="#c8ab37"/><rect x="1553" y="942" width="16" height="16" fill="#d3bc5f"/><rect x="1569" y="942" width="16" height="16" fill="#decd87"/><rect x="1585" y="942" width="16" height="16" fill="#e9ddaf"/><rect x="1601" y="942" width="16" height="16" fill="#f4eed7"/>
<rect x="1617" y="942" width="16" height="16" fill="#24221c"/><rect x="1633" y="942" width="16" height="16" fill="#484537"/><rect x="1649" y="942" width="16" height="16" fill="#6c6753"/>
</g>
<rect x="1665" y="941" width="15" height="18" fill="#eeeae3"/>
<path d="M1669 950 1676 945V955z" fill="#444"/>

<!-- palette scrollbar -->
<rect x="10" y="959.500" width="1637" height="15.500" rx="7" fill="url(#st)"/>
<rect x="20.500" y="959.500" width="391" height="15.500" rx="7" fill="url(#sc)" stroke="#b4a88f"/>
<path d="M213 964V970M215.500 964V970M218 964V970" stroke="#bdb6a8"/>
<path d="M7 967.500 12 964V971z" fill="#bbb"/>
<path d="M1663 967.500 1656 964V971z" fill="#555"/>

<!-- status bar -->
<text x="2.700" y="984" textLength="17" lengthAdjust="spacingAndGlyphs" style="font-size:12px">Fill:</text>
<text x="43" y="984" textLength="10.500" lengthAdjust="spacingAndGlyphs" style="font-size:12px;font-weight:bold">m</text>
<text x="74" y="984" textLength="28" lengthAdjust="spacingAndGlyphs" style="font-size:12px;font-style:italic">None</text>
<text x="2.700" y="997" textLength="37" lengthAdjust="spacingAndGlyphs" style="font-size:12px">Stroke:</text>
<text x="43" y="997" textLength="10.500" lengthAdjust="spacingAndGlyphs" style="font-size:12px;font-weight:bold">m</text>
<rect x="56" y="988" width="46" height="14" fill="#a00"/>
<text x="105.500" y="997" textLength="16" lengthAdjust="spacingAndGlyphs" style="font-size:12px">1,1</text>
<text x="126.400" y="991" textLength="11" lengthAdjust="spacingAndGlyphs" style="font-size:12px">O:</text>
<rect x="141.500" y="979" width="22" height="19.500" rx="3" class="e"/>
<text x="144" y="993" textLength="24" lengthAdjust="spacingAndGlyphs" style="font-size:12.500px">100</text>
<rect x="163.500" y="979" width="13.500" height="19.500" rx="2" fill="#e4dfd5" stroke="#b0a590"/>
<path d="M170 981 173 986H167zM170 996 173 991H167z" fill="#888"/>
<path d="M181 978V1000" stroke="#dcd8cf"/>
<g transform="translate(193,988)"><ellipse rx="5.500" ry="4" fill="#fff" stroke="#111" stroke-width="1.200"/><circle r="2.500" fill="#111"/><path d="M-5-6-3-4M0-7V-5M5-6 3-4M-5 6-3 4M5 6 3 4" stroke="#111"/></g>
<g transform="translate(213,990)"><rect x="-4" y="-1" width="8" height="6" fill="#f6e08a" stroke="#111"/><path d="M-3-1V-4A3 3 0 013-5" fill="none" stroke="#111" stroke-width="1.200"/></g>
<rect class="btn" x="224.500" y="976.500" width="148" height="24" rx="3"/>
<path d="M351 977V1000" stroke="#8f846f"/>
<circle cx="240" cy="988" r="1.500" fill="#3c3b37"/>
<text x="244" y="992" textLength="55" lengthAdjust="spacingAndGlyphs" style="font-size:13px;font-weight:bold;font-style:italic">#g10435</text>
<path d="M356 983H365L360.500 993z" fill="#6e6656"/>
<text x="379" y="992" textLength="26.500" lengthAdjust="spacingAndGlyphs" style="font-size:14px;font-weight:bold">111</text>
<text x="410" y="992" textLength="97" lengthAdjust="spacingAndGlyphs">objects of type</text>
<text x="511.500" y="992" textLength="33.500" lengthAdjust="spacingAndGlyphs" style="font-size:14px;font-weight:bold">Path</text>
<text x="549" y="992" textLength="49" lengthAdjust="spacingAndGlyphs">in layer</text>
<text x="602.500" y="992" textLength="63.500" lengthAdjust="spacingAndGlyphs" style="font-size:14px;font-weight:bold;font-style:italic">#g10435</text>
<text x="666" y="992" textLength="317" lengthAdjust="spacingAndGlyphs">. Click selection to toggle scale/rotation handles.</text>
<path d="M1526 977V1001" stroke="#dcd8cf"/>
<text x="1528.500" y="984" style="font-size:11.500px">X:</text><text x="1547" y="984" textLength="36.500" lengthAdjust="spacingAndGlyphs" style="font-size:12px">963,38</text>
<text x="1528.500" y="997" style="font-size:11.500px">Y:</text><text x="1547" y="997" textLength="36.500" lengthAdjust="spacingAndGlyphs" style="font-size:12px">272,04</text>
<text x="1591.500" y="991" textLength="10" lengthAdjust="spacingAndGlyphs" style="font-size:12px">Z:</text>
<rect x="1605" y="979" width="44" height="18.500" fill="#fff"/>
<text x="1609.700" y="992.500" textLength="31" lengthAdjust="spacingAndGlyphs" style="font-size:13px">160%</text>
<rect x="1650" y="979" width="10" height="18.500" rx="2" fill="#e4dfd5" stroke="#8a8070"/>
<path d="M1655 981 1658 986H1652zM1655 996 1658 991H1652z" fill="#555"/>

<!-- Find dialog -->
<rect x="850.500" y="336.500" width="249" height="294" rx="6" fill="#eeeae3" stroke="#9c8f78"/>
<path d="M850.500 363V342a6 6 0 016-6H1093.500a6 6 0 016 6V363z" fill="url(#tb)"/>
<rect x="860.500" y="341.500" width="59" height="17" rx="8.500" fill="#3a3935" stroke="#555148"/>
<circle cx="870" cy="350" r="7" fill="#4e4c46"/><circle cx="890" cy="350" r="7" fill="#4e4c46"/><circle cx="910" cy="350" r="7" fill="#4e4c46"/>
<path d="M867.500 347.500l5 5M872.500 347.500l-5 5M887 349l3 3 3-3M907 351l3-3 3 3" stroke="#8b877e" fill="none"/>
<text x="932.700" y="355" textLength="96.300" lengthAdjust="spacingAndGlyphs" style="font-size:14px;font-weight:bold;fill:#97928a">Find (Ctrl+F)</text>
<rect class="e" x="936.500" y="368.500" width="157" height="24" rx="3"/>
<rect class="e" x="936.500" y="395.500" width="157" height="24" rx="3"/>
<rect class="e" x="936.500" y="422.500" width="157" height="24" rx="3"/>
<rect class="e" x="936.500" y="449.500" width="157" height="24" rx="3"/>
<text x="900" y="385" textLength="30.700" lengthAdjust="spacingAndGlyphs">Text:</text>
<text x="913.400" y="412" textLength="17.300" lengthAdjust="spacingAndGlyphs">ID:</text>
<text x="894.400" y="439" textLength="36.300" lengthAdjust="spacingAndGlyphs">Style:</text>
<text x="870.700" y="466" textLength="60" lengthAdjust="spacingAndGlyphs">Attribute:</text>
<text x="940.700" y="439" textLength="27.300" lengthAdjust="spacingAndGlyphs">4.46</text>
<text x="897.400" y="490" textLength="33.300" lengthAdjust="spacingAndGlyphs">Type:</text>
<rect x="939" y="480" width="11.500" height="11.500" rx="2" fill="url(#chk)" stroke="#d8c8b8"/>
<path d="M941.500 486 944 489.500 948.500 481.500" fill="none" stroke="#222" stroke-width="1.700"/>
<text x="957.300" y="490" textLength="56.400" lengthAdjust="spacingAndGlyphs">All types</text>
<path d="M858 500.500H1093" stroke="#e4dfd4"/>
<rect x="858.500" y="510.500" width="11.500" height="11.500" rx="2" fill="#fff" stroke="#c8c2b6"/>
<rect x="858.500" y="532.500" width="11.500" height="11.500" rx="2" fill="url(#chk)" stroke="#d8c8b8"/>
<path d="M861 538 863.500 541.500 868 533.500" fill="none" stroke="#222" stroke-width="1.700"/>
<rect x="858.500" y="554.500" width="11.500" height="11.500" rx="2" fill="#fff" stroke="#c8c2b6"/>
<rect x="858.500" y="576.500" width="11.500" height="11.500" rx="2" fill="#fff" stroke="#c8c2b6"/>
<text x="877.300" y="520" textLength="122.700" lengthAdjust="spacingAndGlyphs">Search in selection</text>
<text x="877.300" y="542" textLength="146.700" lengthAdjust="spacingAndGlyphs">Search in current layer</text>
<text x="877.300" y="564" textLength="94.700" lengthAdjust="spacingAndGlyphs">Include hidden</text>
<text x="877.300" y="586" textLength="93.700" lengthAdjust="spacingAndGlyphs">Include locked</text>
<rect class="btn" x="856" y="594.500" width="120.700" height="26" rx="3"/>
<rect class="btn" x="979.500" y="594.500" width="114" height="26" rx="3"/>
<text x="899.300" y="611.700" textLength="34" lengthAdjust="spacingAndGlyphs">Clear</text>
<text x="1023.300" y="611.700" textLength="26.700" lengthAdjust="spacingAndGlyphs">Find</text>
</svg>
</body></html>
